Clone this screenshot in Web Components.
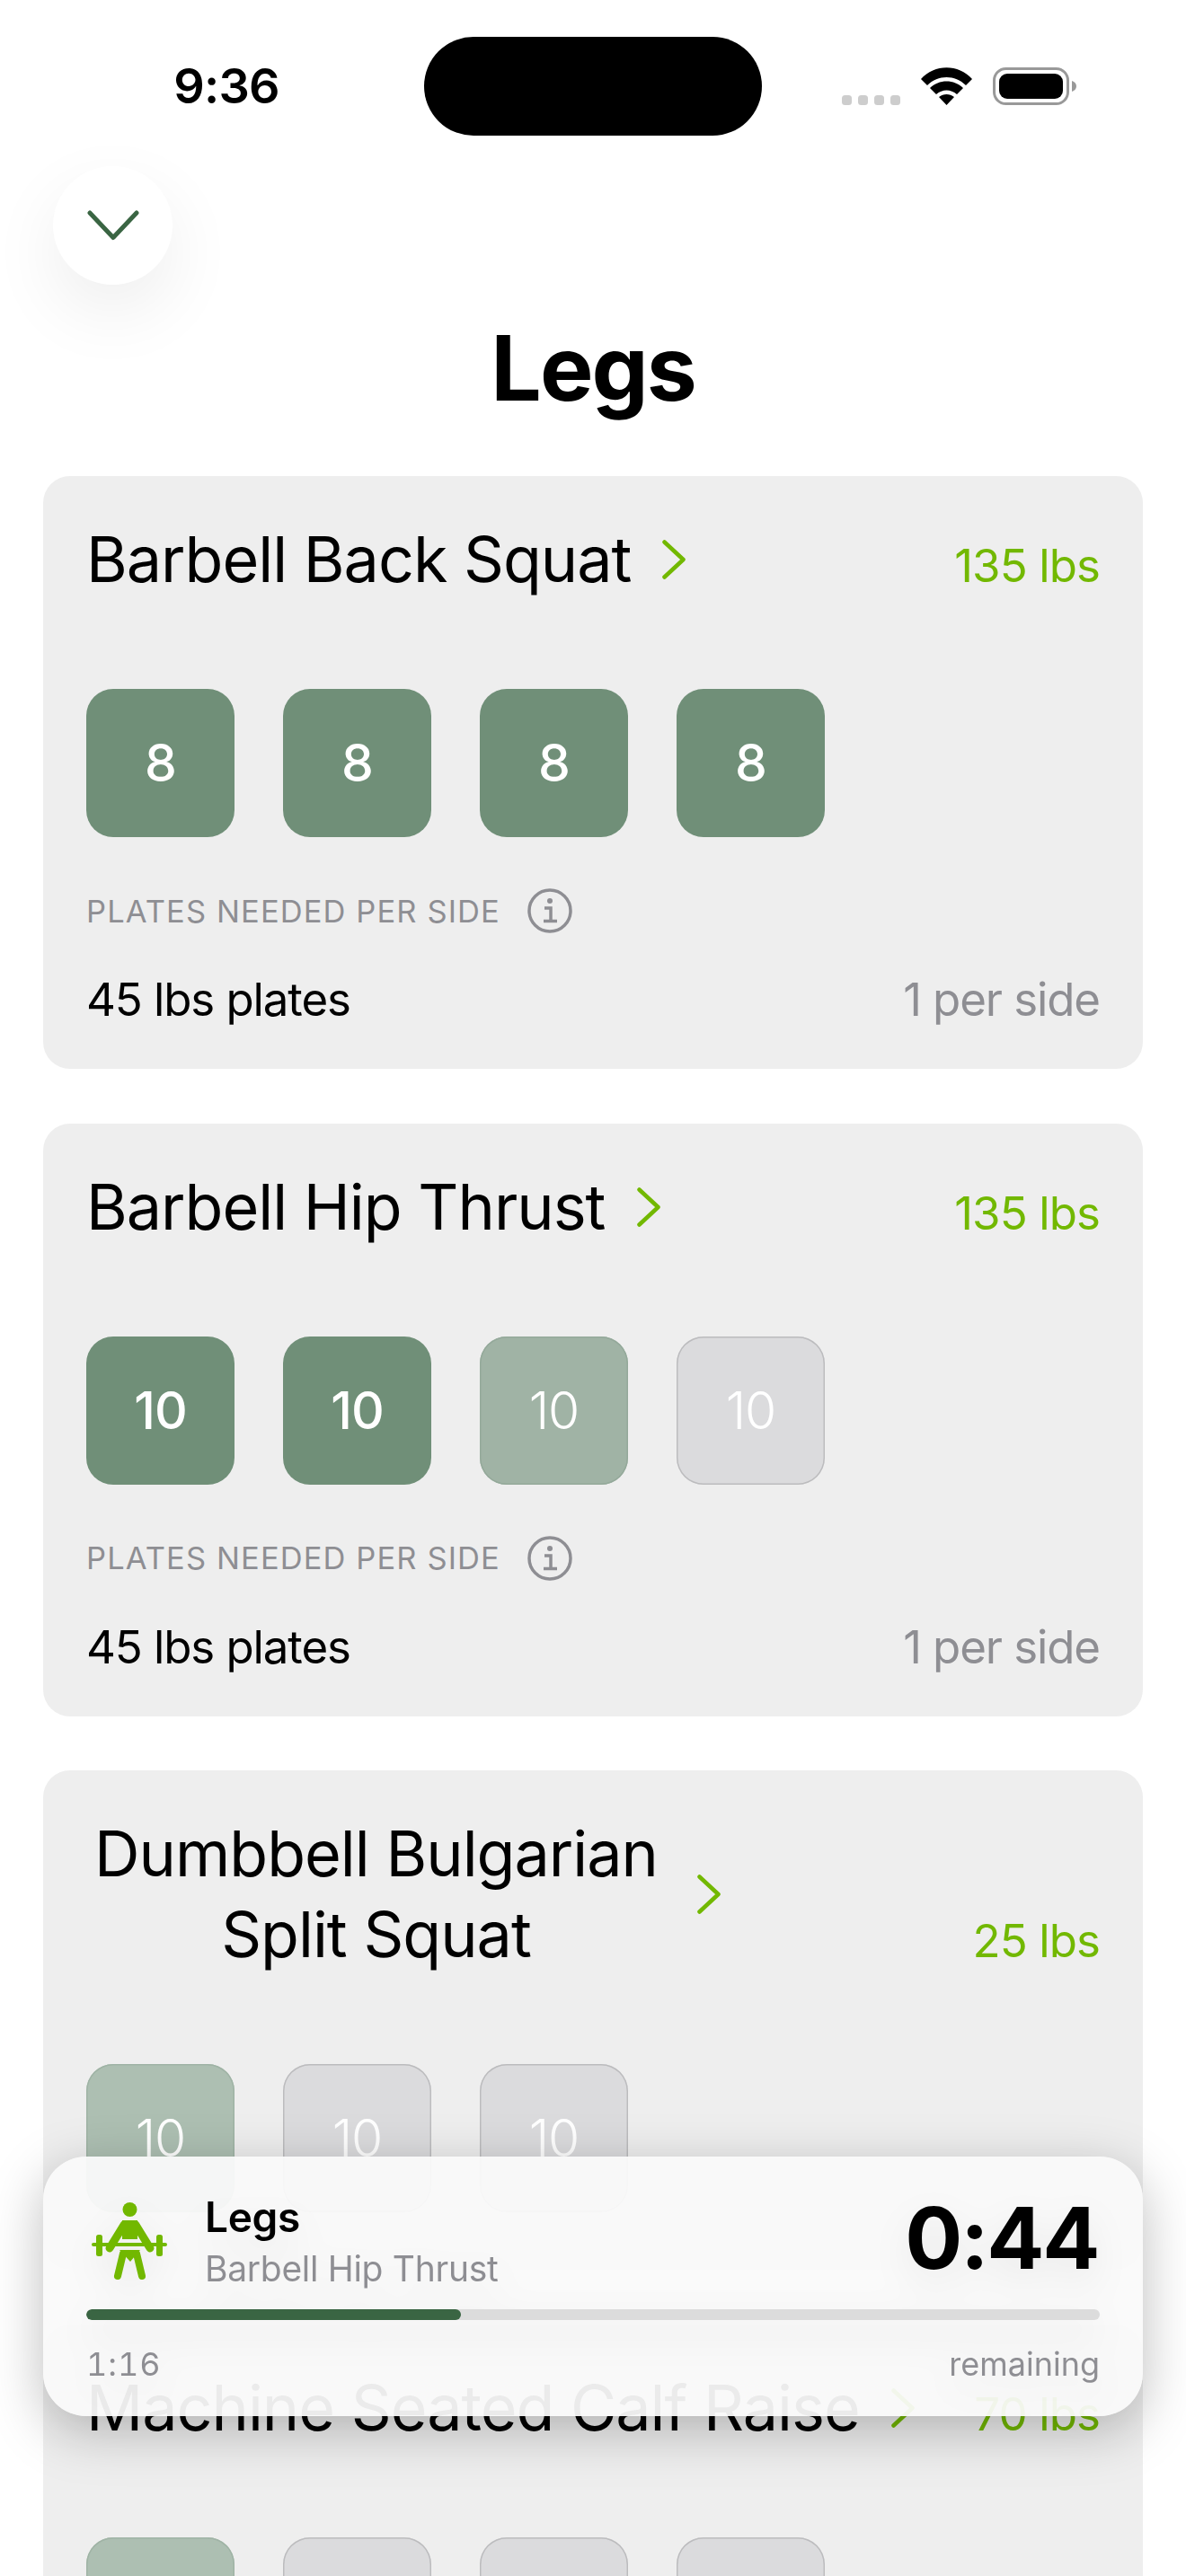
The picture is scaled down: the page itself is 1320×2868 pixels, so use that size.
<!DOCTYPE html>
<html><head><meta charset="utf-8">
<style>
html,body{margin:0;padding:0;background:#fff}
body{font-family:Inter,"Liberation Sans",sans-serif;width:1320px;height:2868px;overflow:hidden}
</style></head>
<body>
<workout-screen>
  <status-bar time="9:36"></status-bar>
  <close-button></close-button>
  <screen-title>Legs</screen-title>
  <card-list>
    <exercise-card weight="135 lbs" plates>
      Barbell Back Squat
      <set-tile state="done">8</set-tile><set-tile state="done">8</set-tile><set-tile state="done">8</set-tile><set-tile state="done">8</set-tile>
    </exercise-card>
    <exercise-card weight="135 lbs" plates>
      Barbell Hip Thrust
      <set-tile state="done">10</set-tile><set-tile state="done">10</set-tile><set-tile state="active">10</set-tile><set-tile state="todo">10</set-tile>
    </exercise-card>
    <exercise-card weight="25 lbs" wide>
      Dumbbell Bulgarian<br>Split Squat
      <set-tile state="next">10</set-tile><set-tile state="todo">10</set-tile><set-tile state="todo">10</set-tile>
    </exercise-card>
    <exercise-card weight="70 lbs">
      Machine Seated Calf Raise
      <set-tile state="next">10</set-tile><set-tile state="todo">10</set-tile><set-tile state="todo">10</set-tile><set-tile state="todo">10</set-tile>
    </exercise-card>
  </card-list>
  <rest-timer></rest-timer>
</workout-screen>
<script>
function def(name, html, setup){
  customElements.define(name, class extends HTMLElement{
    connectedCallback(){
      if(this.shadowRoot) return;
      const r=this.attachShadow({mode:'open'});
      r.innerHTML=typeof html==='function'?html(this):html;
      if(setup) setup(this,r);
    }
  });
}
def('workout-screen',`<style>:host{display:block;position:relative;width:1320px;height:2868px;overflow:hidden;background:#fff}</style><slot></slot>`);

def('status-bar',el=>`<style>
:host{display:grid;grid-template-columns:472px 376px 1fr;height:185px;padding-top:41px;box-sizing:border-box;font-family:Inter,sans-serif}
.time{font-size:54px;font-weight:600;line-height:110px;text-align:center;padding-left:32px;letter-spacing:-.8px;color:#000}
.island{height:110px;background:#000;border-radius:55px}
.sys{display:flex;align-items:flex-start;padding:34px 0 0 89px;gap:23px}
.dots{display:flex;gap:7px;margin-top:31px}
.dots i{width:11px;height:11px;border-radius:3.5px;background:#cdcdcd}
svg{display:block}
</style>
<div class="time">${el.getAttribute('time')}</div>
<div class="island"></div>
<div class="sys">
  <div class="dots"><i></i><i></i><i></i><i></i></div>
  <svg width="57" height="42" viewBox="0 0 57 42"><path d="M0 13C15-4 42-4 57 13L50 20C38 8 19 8 7 20ZM10 23C20 13 37 13 47 23L40 30C33 24 24 24 17 30ZM20 33C25 29 32 29 37 33L28.5 42Z" fill="#000"/></svg>
  <svg width="94" height="42" viewBox="0 0 94 42"><rect x="1.5" y="1.5" width="82" height="39" rx="13" fill="none" stroke="#999" stroke-width="3"/><rect x="7" y="7" width="71" height="28" rx="9" fill="#000"/><path d="M88 15C91 16 93 18 93 21S91 26 88 27Z" fill="#999"/></svg>
</div>`);

def('close-button',`<style>
:host{display:flex;align-items:center;justify-content:center;width:133px;height:132px;margin-left:59px;border-radius:50%;background:#fff;box-shadow:0 30px 80px rgba(0,0,0,.07)}
</style><svg width="58" height="34" viewBox="0 0 58 34"><path d="M3 3L29 30.500L55 3" fill="none" stroke="#3a6543" stroke-width="5" stroke-linecap="round" stroke-linejoin="round"/></svg>`);

def('screen-title',`<style>
:host{display:block;margin-top:32px;height:122px;text-align:center;font:700 100px/122px Inter,sans-serif;letter-spacing:-2px;color:#000}
</style><slot></slot>`);

def('card-list',`<style>:host{display:flex;flex-direction:column;gap:60.5px;margin:59px 48px 0}</style><slot></slot>`);

def('exercise-card',el=>`<style>
:host{display:block;flex:none;background:#eee;border-radius:30px;padding:48px 48px 64px;font-family:Inter,sans-serif}
:host([plates]){padding-bottom:44px}
.head{display:flex;align-items:last baseline}
.name{font-size:70px;line-height:90px;font-weight:380;color:#000;letter-spacing:-1px;text-align:center}
:host([wide]) .name{width:645px}
.chev{align-self:center;margin:0 auto 0 35px;flex:none}
.w{font-size:51px;font-weight:380;color:#72b800;letter-spacing:-.9px;white-space:nowrap}
.sets{display:flex;gap:54px;margin-top:99px}
.sets ::slotted(set-tile){flex:none}
.plates{margin-top:57px}
.ph{display:flex;align-items:center;gap:30px;height:50px;font-size:34.5px;font-weight:440;color:#8e8e93;letter-spacing:1.1px}
.pr{display:flex;justify-content:space-between;margin-top:41px;font-size:51px;line-height:66px;font-weight:380;letter-spacing:-1.1px;color:#000}
.pr span+span{color:#8e8e93}
</style>
<div class="head">
  <div class="name"><slot name="title"></slot></div>
  <svg class="chev" width="26" height="44" viewBox="0 0 26 44"><path d="M2.500 2.500L23.500 22L2.500 41.500" fill="none" stroke="#72b800" stroke-width="4.500" stroke-linecap="round" stroke-linejoin="round"/></svg>
  <div class="w">${el.getAttribute('weight')}</div>
</div>
<div class="sets"><slot name="sets"></slot></div>
${el.hasAttribute('plates')?`<div class="plates">
  <div class="ph"><span>PLATES NEEDED PER SIDE</span><svg width="50" height="50" viewBox="0 0 50 50"><circle cx="25" cy="25" r="23" fill="none" stroke="#8e8e93" stroke-width="3.500"/><circle cx="25" cy="14" r="3" fill="#8e8e93"/><path d="M19 22H26V36M18 36.500H33" fill="none" stroke="#8e8e93" stroke-width="3.500"/></svg></div>
  <div class="pr"><span>45 lbs plates</span><span>1 per side</span></div>
</div>`:''}`,(el)=>{
  const title=document.createElement('span');title.slot='title';
  [...el.childNodes].forEach(n=>{
    if(n.nodeType===1&&n.localName==='set-tile'){n.slot='sets';}
    else{title.appendChild(n);}
  });
  title.innerHTML=title.innerHTML.trim();
  el.appendChild(title);
});

def('set-tile',`<style>
:host{display:flex;align-items:center;justify-content:center;box-sizing:border-box;width:165px;height:165px;border-radius:30px;color:#fff;font:400 57px/1 Inter,sans-serif;letter-spacing:-1px;background:#708f78}
:host([state=done]){font-weight:500}
:host([state=active]){background:#a0b3a5;box-shadow:inset 0 0 0 1.5px #94a99a;font-weight:300}
:host([state=next]){background:#adbfb2;box-shadow:inset 0 0 0 1.5px #9fb3a5;font-weight:300}
:host([state=todo]){background:#dbdbdd;box-shadow:inset 0 0 0 1.5px #bcbcbe;font-weight:300}
</style><slot></slot>`);

def('rest-timer',`<style>
:host{position:absolute;left:48px;top:2401px;width:1224px;height:289px;box-sizing:border-box;padding:48px;border-radius:48px;background:rgba(250,250,250,.94);box-shadow:0 16px 60px rgba(0,0,0,.26);font-family:Inter,sans-serif}
.wrap{filter:drop-shadow(0 16px 20px rgba(0,0,0,.07))}
.top{display:flex;align-items:flex-start}
svg{display:block;margin:3px 44px 0 6px;flex:none}
.t{font-size:46px;line-height:58px;font-weight:600;color:#000;letter-spacing:-.3px;margin:-10px 0 0 -2px}
.s{font-size:39px;line-height:52px;color:#8e8e93;letter-spacing:-.3px;font-weight:380;margin:3px 0 0 -2px}
.clock{margin-left:auto;font-size:95px;line-height:112px;font-weight:700;color:#000;letter-spacing:-2.4px;margin-top:-13px;margin-right:2px}
.bar{height:12px;border-radius:6px;background:#dcdcdc;margin-top:19px;overflow:hidden}
.bar i{display:block;width:417px;height:12px;border-radius:6px;background:#3a6543}
.foot{display:flex;justify-content:space-between;margin-top:27px;font-size:36px;line-height:44px;color:#8e8e93;font-weight:380}
.foot span:first-child{font-variant-numeric:tabular-nums;letter-spacing:1px}
</style>
<div class="wrap">
<div class="top">
  <svg width="84" height="86" viewBox="0 0 84 86" fill="#72b800">
    <circle cx="42.500" cy="8" r="8"/>
    <path d="M34 20H51V41H34Z"/>
    <path d="M36 25L20 51M49 25L65 51" stroke="#72b800" stroke-width="9" stroke-linecap="round" fill="none"/>
    <rect x="0" y="45" width="84" height="4" rx="2"/>
    <rect x="5" y="36" width="7" height="24" rx="2.500"/><rect x="72" y="36" width="7" height="24" rx="2.500"/>
    <path d="M31 53H54L43 66Z"/>
    <path d="M35 57L29 82M50 57L56 82" stroke="#72b800" stroke-width="8" stroke-linecap="round" fill="none"/>
  </svg>
  <div><div class="t">Legs</div><div class="s">Barbell Hip Thrust</div></div>
  <div class="clock">0:44</div>
</div>
<div class="bar"><i></i></div>
<div class="foot"><span>1:16</span><span>remaining</span></div>
</div>`);
</script>
</body></html>
